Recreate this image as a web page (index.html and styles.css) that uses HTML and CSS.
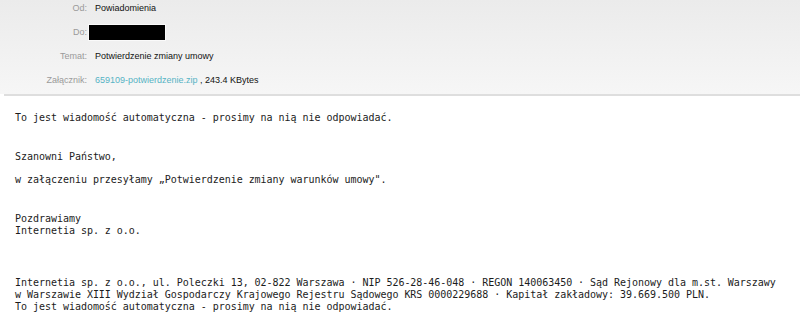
FILE: index.html
```html
<!doctype html>
<html lang="pl">
    <head>
        <meta charset="UTF-8">
        <title>Potwierdzenie zmiany umowy</title>
        <link rel="stylesheet" href="styles.css">
    </head>
    <body>
        <header class="head">
            <div class="meta">
                <div class="row"><span class="label">Od:</span><span class="value">Powiadomienia</span></div>
                <div class="row"><span class="label">Do:</span><span class="hidden"></span></div>
                <div class="row"><span class="label">Temat:</span><span class="value">Potwierdzenie zmiany umowy</span></div>
                <div class="row"><span class="label">Załącznik:</span><span class="value"><a href="#">659109-potwierdzenie.zip</a> , 243.4 KBytes</span></div>
            </div>
        </header>
        <div class="rule"></div>
        <main class="msg">
            <p class="first">To jest wiadomość automatyczna - prosimy na nią nie odpowiadać.</p>
            <p class="greet">Szanowni Państwo,</p>
            <p class="close">w załączeniu przesyłamy „Potwierdzenie zmiany warunków umowy".</p>
            <p class="greet">Pozdrawiamy<br>Internetia sp. z o.o.</p>
            <p class="foot">Internetia sp. z o.o., ul. Poleczki 13, 02-822 Warszawa · NIP 526-28-46-048 · REGON 140063450 · Sąd Rejonowy dla m.st. Warszawy<br>w Warszawie XIII Wydział Gospodarczy Krajowego Rejestru Sądowego KRS 0000229688 · Kapitał zakładowy: 39.669.500 PLN.<br>To jest wiadomość automatyczna - prosimy na nią nie odpowiadać.</p>
        </main>
    </body>
</html>
```

FILE: styles.css
```css
body {
    margin: 0;
    background: #fff;
}
.head {
    background: linear-gradient(#ebebeb, #f6f6f6);
    height: 94px;
    overflow: hidden;
    font-family: "Liberation Sans", Arial, sans-serif;
    font-size: 9px;
    line-height: 11px;
}
.meta {
    margin-top: -4px;
}
.row {
    display: flex;
    align-items: center;
    height: 24px;
}
.label {
    width: 87px;
    text-align: right;
    color: #9a9a9a;
    margin-right: 8px;
}
.value {
    color: #111;
}
.value a {
    color: #56b3c4;
    text-decoration: none;
}
.hidden {
    display: inline-block;
    width: 76px;
    height: 15px;
    background: #000;
    border: 1px solid #fafafa;
    margin-left: -7px;
}
.rule {
    height: 2px;
    margin-left: 4px;
    background: #dedede;
}
.msg {
    padding: 0 15px;
    font-family: "DejaVu Sans Mono", monospace;
    font-size: 10px;
    letter-spacing: -0.03px;
    line-height: 12px;
    color: #1c1c1c;
}
.msg p {
    margin: 0;
    white-space: nowrap;
}
.msg .first {
    margin-top: 16px;
}
.msg .greet {
    margin-top: 27px;
}
.msg .close {
    margin-top: 11px;
}
.msg .foot {
    margin-top: 40px;
}
```
